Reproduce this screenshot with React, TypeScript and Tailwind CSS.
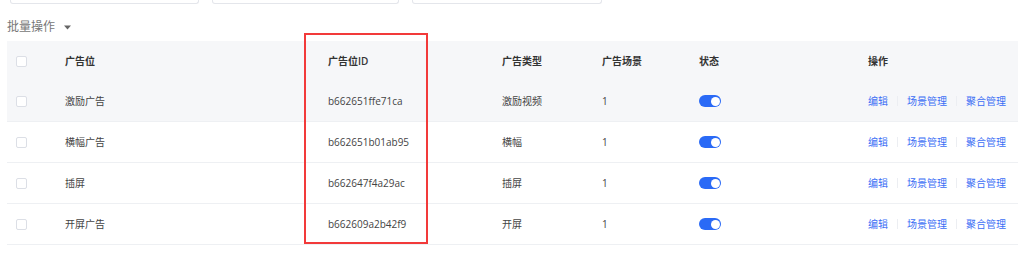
import React from "react";

const rows = [
  { name: "激励广告", id: "b662651ffe71ca", type: "激励视频", scene: "1", hover: true },
  { name: "横幅广告", id: "b662651b01ab95", type: "横幅", scene: "1", hover: false },
  { name: "插屏", id: "b662647f4a29ac", type: "插屏", scene: "1", hover: false },
  { name: "开屏广告", id: "b662609a2b42f9", type: "开屏", scene: "1", hover: false },
];

const cols = "grid grid-cols-[50px_263px_174px_100px_97px_169px_158px]";

function Checkbox() {
  return <div className="w-[11px] h-[11px] border border-[#dcdfe6] rounded-[2px] bg-white" />;
}

function Toggle() {
  return (
    <div className="w-[22px] h-[12px] rounded-full bg-[#2a6af6] flex items-center justify-end pr-[1.5px]">
      <div className="w-[9px] h-[9px] rounded-full bg-white" />
    </div>
  );
}

export default function App() {
  return (
    <div
      className="relative w-[1024px] h-[255px] bg-white overflow-hidden"
      style={{ fontFamily: '"Open Sans", "Noto Sans CJK SC", sans-serif' }}
    >
      <div className="flex gap-[13px] pl-[10px] h-[4px]">
        <div className="w-[189px] h-[4px] border-b border-l border-r border-[#e4e6eb] rounded-b-[3px]" />
        <div className="w-[187px] h-[4px] border-b border-l border-r border-[#e4e6eb] rounded-b-[3px]" />
        <div className="w-[190px] h-[4px] border-b border-l border-r border-[#e4e6eb] rounded-b-[3px]" />
      </div>
      <div className="mt-[12px] h-[22px] pl-[7px] flex items-center text-[12px] text-[#777]">
        <span>批量操作</span>
        <svg className="ml-[9px]" width="7" height="5" viewBox="0 0 7 5">
          <path d="M0 0.5 L7 0.5 L3.5 4.5 Z" fill="#666" />
        </svg>
      </div>
      <div className="mt-[3px] ml-[7px] w-[1011px] text-[10px] text-[#444]">
        <div className={`${cols} h-[40px] items-center bg-[#f6f7f9] font-semibold text-[#333]`}>
          <div className="pl-[9px]"><Checkbox /></div>
          <div className="pl-[8px]">广告位</div>
          <div className="pl-[8px]">广告位ID</div>
          <div className="pl-[8px]">广告类型</div>
          <div className="pl-[8px]">广告场景</div>
          <div className="pl-[8px]">状态</div>
          <div className="pl-[8px]">操作</div>
        </div>
        {rows.map((r) => (
          <div
            key={r.id}
            className={`${cols} h-[41px] items-center border-b border-[#eef0f3] ${r.hover ? "bg-[#f6f7f9]" : "bg-white"}`}
          >
            <div className="pl-[9px]"><Checkbox /></div>
            <div className="pl-[8px]">{r.name}</div>
            <div className="pl-[8px]">{r.id}</div>
            <div className="pl-[8px]">{r.type}</div>
            <div className="pl-[8px]">{r.scene}</div>
            <div className="pl-[8px]"><Toggle /></div>
            <div className="pl-[8px] flex items-center text-[#3b6ef5]">
              <span>编辑</span>
              <span className="mx-[9px] w-px h-[10px] bg-[#eceef2]" />
              <span>场景管理</span>
              <span className="mx-[9px] w-px h-[10px] bg-[#eceef2]" />
              <span>聚合管理</span>
            </div>
          </div>
        ))}
      </div>
      <div className="absolute left-[304px] top-[33px] w-[124px] h-[211px] border-2 border-[#f23a3a]" />
    </div>
  );
}
